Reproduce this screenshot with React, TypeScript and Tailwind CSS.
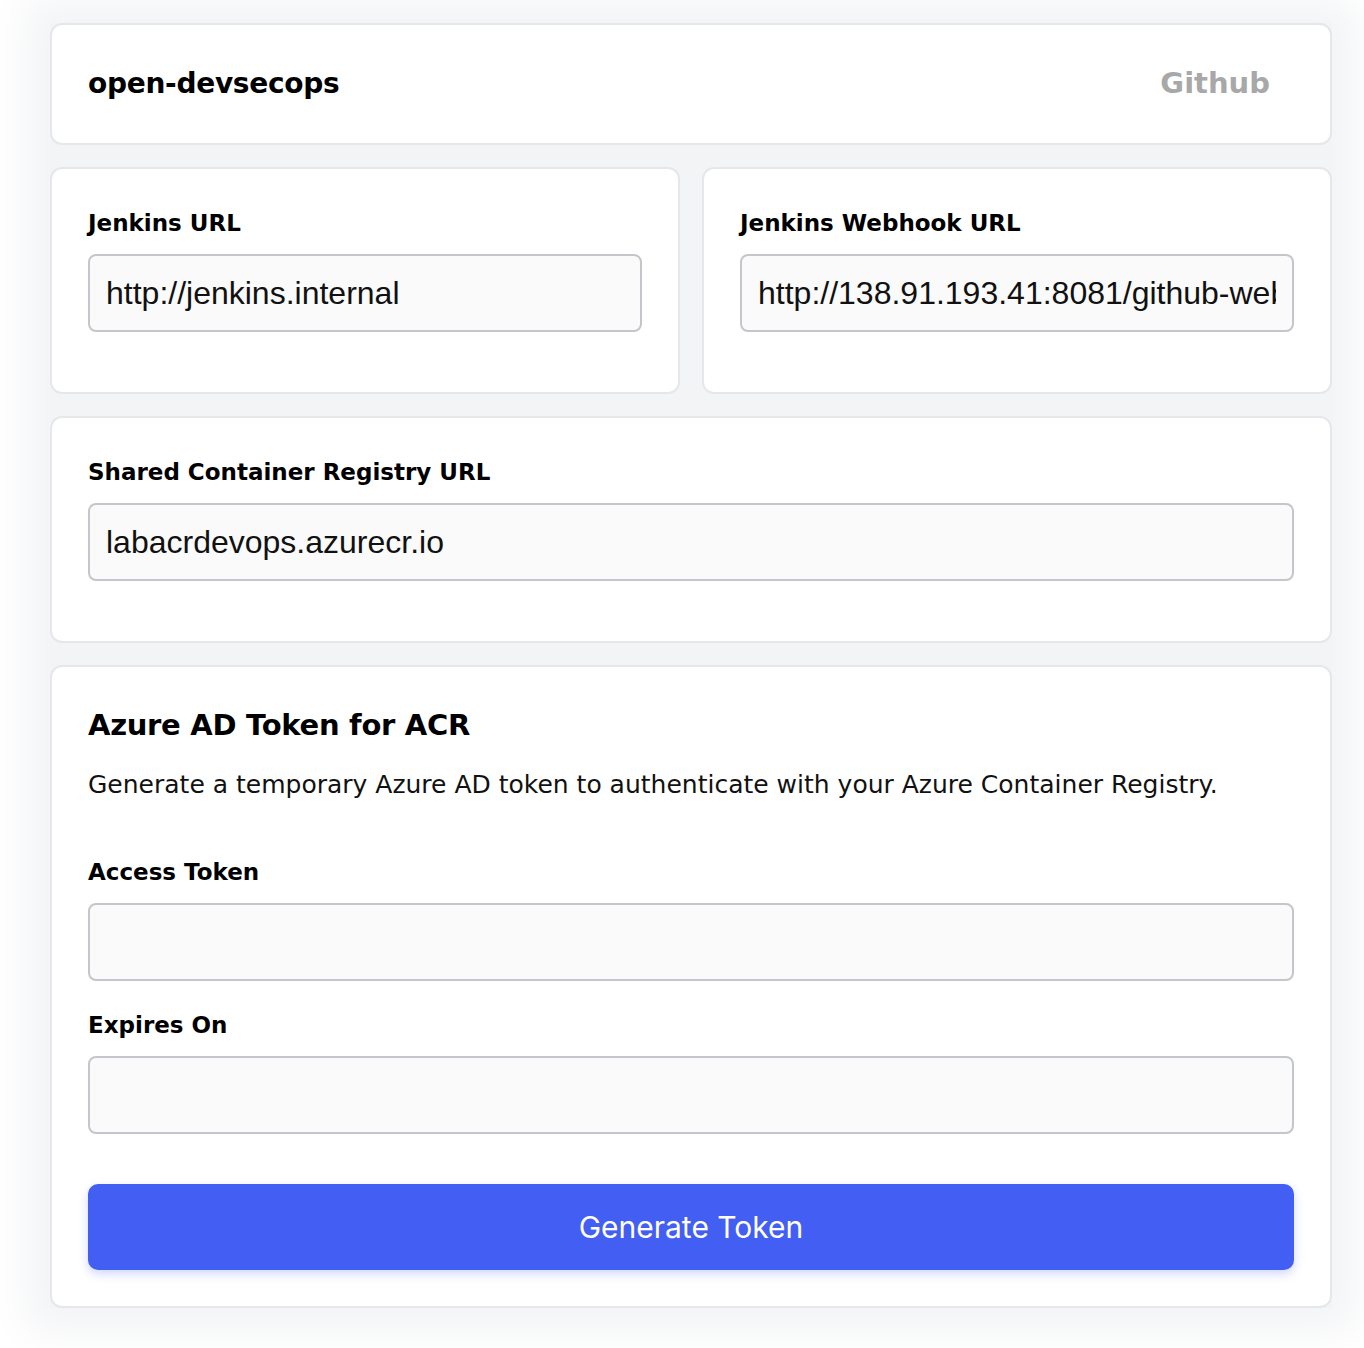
import React from "react";

const heading = "font-['DejaVu_Sans','Noto_Sans',sans-serif]";

function Field({ label, value }: { label: string; value: string }) {
  return (
    <div>
      <label className={`block ${heading} text-[23px] font-bold leading-[32px] text-black`}>
        {label}
      </label>
      <input
        readOnly
        value={value}
        className="mt-[15px] block h-[78px] w-full rounded-lg border-2 border-[#c3c6cb] bg-[#fafafa] px-[16px] font-['Liberation_Sans',Arial,sans-serif] text-[32px] text-[#111] outline-none"
      />
    </div>
  );
}

export default function App() {
  return (
    <div className="min-h-[1348px] w-full bg-white py-[23px] pl-[50px] pr-[32px]">
      <div className="flex flex-col gap-[22px] bg-[#f3f4f6] shadow-[0_0_40px_24px_#f3f4f6]">
        <div className="flex h-[122px] items-center justify-between rounded-xl border-2 border-[#e5e7eb] bg-white pl-[36px] pr-[60px]">
          <h1 className={`${heading} text-[28px] font-bold tracking-[-0.01em] text-black`}>open-devsecops</h1>
          <span className={`${heading} text-[29px] font-bold text-[#a8a8a8]`}>Github</span>
        </div>

        <div className="grid grid-cols-2 gap-[22px]">
          <div className="h-[227px] rounded-xl border-2 border-[#e5e7eb] bg-white px-[36px] pt-[38px]">
            <Field label="Jenkins URL" value="http://jenkins.internal" />
          </div>
          <div className="h-[227px] rounded-xl border-2 border-[#e5e7eb] bg-white px-[36px] pt-[38px]">
            <Field label="Jenkins Webhook URL" value="http://138.91.193.41:8081/github-webhook/" />
          </div>
        </div>

        <div className="h-[227px] rounded-xl border-2 border-[#e5e7eb] bg-white px-[36px] pt-[38px]">
          <Field label="Shared Container Registry URL" value="labacrdevops.azurecr.io" />
        </div>

        <div className="rounded-xl border-2 border-[#e5e7eb] bg-white px-[36px] pb-[36px] pt-[36px]">
          <h2 className={`${heading} text-[29px] font-bold leading-[44px] tracking-[-0.01em] text-black`}>
            Azure AD Token for ACR
          </h2>
          <p className={`mt-[22px] ${heading} text-[25px] leading-[32px] text-[#111]`}>
            Generate a temporary Azure AD token to authenticate with your Azure Container Registry.
          </p>
          <div className="mt-[55px]">
            <Field label="Access Token" value="" />
          </div>
          <div className="mt-[28px]">
            <Field label="Expires On" value="" />
          </div>
          <button className="mt-[50px] flex h-[86px] w-full items-center justify-center rounded-[10px] bg-[#425ef3] font-['Inter',sans-serif] text-[30px] font-normal text-white shadow-[0_4px_10px_rgba(66,94,243,0.25)]">
            Generate Token
          </button>
        </div>
      </div>
    </div>
  );
}
